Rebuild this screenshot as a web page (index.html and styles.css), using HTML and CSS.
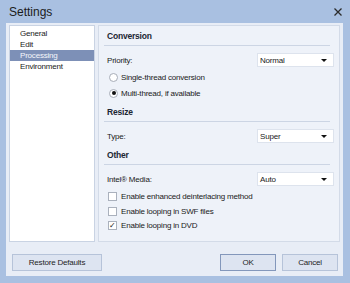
FILE: index.html
```html
<!DOCTYPE html>
<html>
  <head>
    <title>Settings</title>
    <meta charset="utf-8" />
    <link rel="stylesheet" href="styles.css">
  </head>
  <body>
    <div class="window">
      <div class="titlebar">
        <span class="title">Settings</span>
        <svg class="close" width="10" height="10" viewBox="0 0 10 10">
          <path d="M1.5 1.5 L8.5 8.5 M8.5 1.5 L1.5 8.5" stroke="#2b2b2b" stroke-width="1.3" fill="none"/>
        </svg>
      </div>
      <div class="client">
        <div class="main">
          <ul class="pages">
            <li>General</li>
            <li>Edit</li>
            <li class="sel">Processing</li>
            <li>Environment</li>
          </ul>
          <div class="panel">
            <div class="head first">Conversion</div>
            <div class="row r-prio">
              <span>Priority:</span>
              <div class="select"><span>Normal</span><i class="arrow"></i></div>
            </div>
            <div class="opt r-single"><i class="radio"></i>Single-thread conversion</div>
            <div class="opt r-multi"><i class="radio on"></i>Multi-thread, if available</div>

            <div class="head">Resize</div>
            <div class="row">
              <span>Type:</span>
              <div class="select"><span>Super</span><i class="arrow"></i></div>
            </div>

            <div class="head">Other</div>
            <div class="row">
              <span>Intel® Media:</span>
              <div class="select"><span>Auto</span><i class="arrow"></i></div>
            </div>
            <div class="opt c1"><i class="check"></i>Enable enhanced deinterlacing method</div>
            <div class="opt c2"><i class="check"></i>Enable looping in SWF files</div>
            <div class="opt c3"><i class="check on">✓</i>Enable looping in DVD</div>
          </div>
        </div>
        <div class="footer">
          <button class="btn wide">Restore Defaults</button>
          <span class="spacer"></span>
          <button class="btn def">OK</button>
          <button class="btn">Cancel</button>
        </div>
      </div>
    </div>
  </body>
</html>
```

FILE: styles.css
```css
body {
    margin: 0;
    font-family: "Liberation Sans", Arial, sans-serif;
    font-size: 8px;
    letter-spacing: -0.2px;
    color: #1a1a1a; }

div.window {
    width: 350px;
    height: 283px;
    background: #a9c0e1;
    display: flex;
    flex-direction: column; }

div.titlebar {
    height: 23px;
    display: flex;
    align-items: center;
    justify-content: space-between;
    padding: 0 7px 0 9px;
    box-sizing: border-box; }
div.titlebar span.title {
    font-size: 12px;
    letter-spacing: 0;
    color: #1b1b1b; }
div.titlebar svg.close {
    margin-top: 1px; }

div.client {
    flex: 1;
    margin: 0 7px 7px 6px;
    background: #e8edf6;
    display: flex;
    flex-direction: column; }

div.main {
    display: flex;
    gap: 3px;
    padding: 2px 3px 0 3px;
    height: 217px; }

ul.pages {
    list-style: none;
    margin: 0;
    padding: 2px 0 0 0;
    width: 86px;
    background: #ffffff;
    border: 1px solid #c9d3e3;
    box-sizing: border-box; }
ul.pages li {
    height: 11px;
    line-height: 11px;
    padding-left: 10px; }
ul.pages li.sel {
    background: #7d90b7;
    color: #f4f6fb; }

div.panel {
    flex: 1;
    background: #eef2f9;
    border: 1px solid #d3dbe8;
    padding: 0 9px 0 5px;
    display: flex;
    flex-direction: column; }

div.head {
    height: 17px;
    line-height: 17px;
    padding-left: 3px;
    font-weight: bold;
    font-size: 8.5px;
    color: #1c2633;
    border-bottom: 1px solid #ccd5e4;
    margin-top: 4px; }
div.head.first {
    margin-top: 2px; }

div.row {
    display: flex;
    align-items: center;
    justify-content: space-between;
    height: 14px;
    margin-top: 7px;
    padding-left: 3px; }

div.select {
    width: 77px;
    height: 14px;
    box-sizing: border-box;
    background: #ffffff;
    border: 1px solid #dde3ed;
    display: flex;
    align-items: center;
    justify-content: space-between;
    padding: 0 6px 0 2px;
    margin-right: -4px; }
i.arrow {
    width: 0;
    height: 0;
    border-left: 3px solid transparent;
    border-right: 3px solid transparent;
    border-top: 3px solid #111111; }

div.opt {
    display: flex;
    align-items: center;
    height: 14px;
    padding-left: 4px; }
div.r-single { margin-top: 3px; }
div.r-multi { margin-top: 2px; }
div.c1 { margin-top: 3px; }
div.c2 { margin-top: 1px; }

i.radio {
    width: 9px;
    height: 9px;
    box-sizing: border-box;
    border: 1px solid #a7adb8;
    border-radius: 50%;
    background: #ffffff;
    margin: 0 3px 0 1px;
    display: flex;
    align-items: center;
    justify-content: center; }
i.radio.on:after {
    content: '';
    width: 4px;
    height: 4px;
    border-radius: 50%;
    background: #111111; }

i.check {
    width: 9px;
    height: 9px;
    box-sizing: border-box;
    border: 1px solid #aab1bd;
    background: #ffffff;
    margin-right: 4px;
    font-style: normal;
    font-size: 8px;
    line-height: 7px;
    text-align: center;
    color: #222222; }

div.footer {
    display: flex;
    gap: 6px;
    padding: 12px 5px 0 6px; }
span.spacer {
    flex: 1; }
button.btn {
    font-family: "Liberation Sans", Arial, sans-serif;
    font-size: 8px;
    letter-spacing: -0.2px;
    color: #1e1e1e;
    width: 56px;
    height: 17px;
    padding: 0;
    background: #dde4f1;
    border: 1px solid #b6c3d9; }
button.btn.wide {
    width: 90px; }
button.btn.def {
    border-color: #8397bb; }
```
